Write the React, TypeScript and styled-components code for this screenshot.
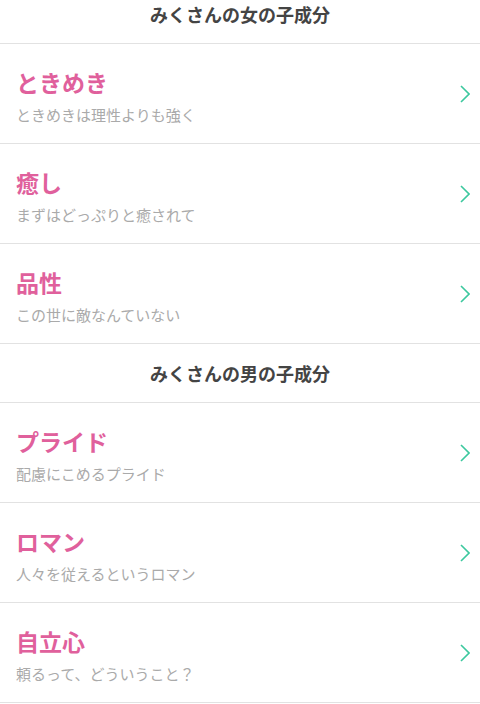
import styled, { createGlobalStyle } from "styled-components";

const GlobalStyle = createGlobalStyle`
  body {
    margin: 0;
    background: #ffffff;
    font-family: "Noto Sans CJK JP", "Noto Sans", sans-serif;
  }
`;

const Page = styled.div`
  width: 480px;
  height: 704px;
  overflow: hidden;
  background: #ffffff;
`;

// list is scrolled a little, so the first heading is cut at the top
const Scroller = styled.div`
  margin-top: -15px;
`;

const SectionHeader = styled.div`
  height: 58px;
  display: flex;
  align-items: center;
  justify-content: center;
  border-bottom: 1px solid #e2e2e2;
  font-size: 18px;
  font-weight: 700;
  color: #444444;
`;

const Row = styled.div`
  display: flex;
  align-items: center;
  justify-content: space-between;
  height: 99px;
  padding: 0 10px 0 16px;
  border-bottom: 1px solid #e2e2e2;
  box-sizing: content-box;
`;

const Texts = styled.div`
  display: flex;
  flex-direction: column;
  padding-top: 3px;
`;

const Title = styled.div`
  font-size: 23px;
  line-height: 34px;
  font-weight: 700;
  color: #e0609c;
`;

const Subtitle = styled.div`
  margin-top: 5px;
  font-size: 15px;
  line-height: 22px;
  color: #aaaaaa;
`;

const Chevron = () => (
  <svg width="10" height="18" viewBox="0 0 10 18" fill="none">
    <path d="M1 1 L9 9 L1 17" stroke="#3cc89e" strokeWidth="1.6" />
  </svg>
);

type Item = { title: string; sub: string };

const girl: Item[] = [
  { title: "ときめき", sub: "ときめきは理性よりも強く" },
  { title: "癒し", sub: "まずはどっぷりと癒されて" },
  { title: "品性", sub: "この世に敵なんていない" },
];

const boy: Item[] = [
  { title: "プライド", sub: "配慮にこめるプライド" },
  { title: "ロマン", sub: "人々を従えるというロマン" },
  { title: "自立心", sub: "頼るって、どういうこと？" },
];

function Section({ heading, items }: { heading: string; items: Item[] }) {
  return (
    <>
      <SectionHeader>{heading}</SectionHeader>
      {items.map((it) => (
        <Row key={it.title}>
          <Texts>
            <Title>{it.title}</Title>
            <Subtitle>{it.sub}</Subtitle>
          </Texts>
          <Chevron />
        </Row>
      ))}
    </>
  );
}

export default function App() {
  return (
    <Page>
      <GlobalStyle />
      <Scroller>
        <Section heading="みくさんの女の子成分" items={girl} />
        <Section heading="みくさんの男の子成分" items={boy} />
      </Scroller>
    </Page>
  );
}
